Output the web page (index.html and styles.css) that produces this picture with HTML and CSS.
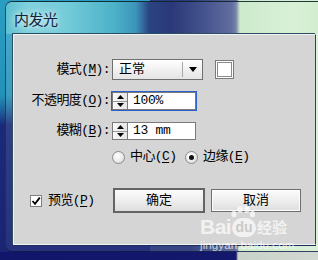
FILE: index.html
```html
<!DOCTYPE html>
<html lang="zh-CN">
<head>
<meta charset="utf-8">
<title>内发光</title>
<link rel="stylesheet" href="styles.css">
</head>
<body>
<div class="desktop">
  <div class="window">
    <div class="titlebar"><span class="title">内发光</span></div>
    <div class="client">
      <div class="row r1">
        <span class="label">模式(<u>M</u>):</span>
        <div class="select">
          <span class="sel-text">正常</span>
          <span class="sel-sep"></span>
          <svg class="sel-arrow" width="8" height="5" viewBox="0 0 8 5"><path d="M0 0H8L4 5Z" fill="#000"/></svg>
        </div>
        <div class="swatch"><div class="swatch-in"></div></div>
      </div>
      <div class="row r2">
        <span class="label">不透明度(<u>O</u>):</span>
        <div class="field focus">
          <div class="spin">
            <span class="spin-half"><svg width="7" height="4" viewBox="0 0 7 4"><path d="M3.5 0L7 4H0Z" fill="#000"/></svg></span>
            <span class="spin-half"><svg width="7" height="4" viewBox="0 0 7 4"><path d="M0 0H7L3.5 4Z" fill="#000"/></svg></span>
          </div>
          <div class="input">100%</div>
        </div>
      </div>
      <div class="row r3">
        <span class="label">模糊(<u>B</u>):</span>
        <div class="field">
          <div class="spin">
            <span class="spin-half"><svg width="7" height="4" viewBox="0 0 7 4"><path d="M3.5 0L7 4H0Z" fill="#000"/></svg></span>
            <span class="spin-half"><svg width="7" height="4" viewBox="0 0 7 4"><path d="M0 0H7L3.5 4Z" fill="#000"/></svg></span>
          </div>
          <div class="input">13 mm</div>
        </div>
      </div>
      <div class="row r4">
        <span class="label"></span>
        <span class="radio first"><span class="rb"></span>中心(<u>C</u>)</span>
        <span class="radio"><span class="rb on"></span>边缘(<u>E</u>)</span>
      </div>
      <div class="row r5">
        <div class="check-wrap">
          <span class="cb"><svg width="10" height="10" viewBox="0 0 10 10"><path d="M1.5 5L4 7.8L8.8 1.6" fill="none" stroke="#000" stroke-width="1.8"/></svg></span>
          <span>预览(<u>P</u>)</span>
        </div>
        <div class="btn default">确定</div>
        <div class="btn cancel">取消</div>
      </div>
    </div>
  </div>
  <div class="watermark">
    <svg class="paw" width="24" height="12" viewBox="0 0 24 12">
      <ellipse cx="3" cy="8" rx="2.6" ry="3.2" fill="#fff"/>
      <ellipse cx="9" cy="3.5" rx="2.8" ry="3.4" fill="#fff"/>
      <ellipse cx="16" cy="3.5" rx="2.8" ry="3.4" fill="#fff"/>
      <ellipse cx="21.5" cy="8" rx="2.6" ry="3.2" fill="#fff"/>
    </svg>
    <span class="wm-bai">Bai</span>
    <span class="wm-du">du</span>
    <span class="wm-jy">经验</span>
    <span class="wm-url">jingyan.baidu.com</span>
  </div>
</div>
</body>
</html>
```

FILE: styles.css
```css
html, body {
  margin: 0;
  padding: 0;
}

body {
  width: 318px;
  height: 260px;
  overflow: hidden;
  font-family: "Liberation Mono", "Noto Sans CJK SC", monospace;
  font-size: 13px;
  color: #000;
}

.desktop {
  position: relative;
  width: 318px;
  height: 260px;
  overflow: hidden;
  display: flex;
  flex-direction: column;
  background:
    linear-gradient(to right, #12166a 0, #14186c 236px, #c9d3c9 238px, #d2d8d2 100%) bottom / 100% 8px no-repeat,
    linear-gradient(to right, rgba(205,234,205,0) 236px, #cdeacd 239px, #d8f0d6 100%),
    linear-gradient(to bottom, #2a9ec2 0, #2392b8 95px, #1e5c98 112px, #1a2a78 125px, #1a2474 100%) left top / 150px 100% no-repeat,
    linear-gradient(to right, #2a3a7c 0, #2c3a7c 40px, #5a6898 86px) 150px 0 / 87px 100% no-repeat,
    #1a2474;
}

.window {
  box-sizing: border-box;
  width: 313px;
  height: 251px;
  margin: 1px 0 0 5px;
  padding: 0 2px 6px 7px;
  border-top: 1px solid rgba(16, 36, 44, 0.9);
  border-left: 1px solid rgba(20, 50, 70, 0.75);
  border-bottom: 1px solid rgba(10, 20, 60, 0.8);
  border-radius: 7px 0 0 7px;
  background: linear-gradient(to bottom, rgba(255,255,255,0.14), rgba(255,255,255,0.06));
  display: flex;
  flex-direction: column;
}

.titlebar {
  height: 32px;
  margin: 0 -2px 0 -7px;
  padding-left: 8px;
  display: flex;
  align-items: center;
  border-radius: 6px 0 0 0;
  background: linear-gradient(to right,
    #5fc0d0 0, #7fd1dd 22px, #74ccd9 60px, #4cb2c8 108px, #3c94ba 130px,
    #2b4482 143px, #2a3878 165px, #46558e 200px, #626ea0 226px, #7884a8 230px,
    #cdeacd 234px, #d8f1d6 290px, #d2edd0 100%);
}

.title {
  font-family: "Noto Sans CJK SC", sans-serif;
  font-size: 15px;
  line-height: 18px;
  color: #14243c;
  letter-spacing: -0.5px;
  text-shadow: 0 0 6px rgba(255,255,255,0.9), 0 0 10px rgba(255,255,255,0.7);
  margin-top: 1px;
}

.client {
  flex: 1;
  box-sizing: border-box;
  background: #d5d5d5;
  border: 1px solid #eef3f4;
  border-right-color: #3a423a;
  box-shadow: -1px -1px 0 #2c4c64, 0 1px 0 #1e2c5e;
  display: flex;
  flex-direction: column;
}

.row {
  display: flex;
  align-items: center;
}

.label {
  box-sizing: border-box;
  width: 97px;
  padding-right: 1px;
  text-align: right;
  white-space: nowrap;
  line-height: 16px;
  letter-spacing: -0.6px;
}

u {
  text-underline-offset: 2px;
}

.r1 { margin-top: 24px; height: 21px; }
.r2 { margin-top: 11px; height: 20px; }
.r3 { margin-top: 10px; height: 20px; }
.r4 { margin-top: 8px; height: 16px; }
.r5 { margin-top: 23px; height: 25px; }

/* select */
.select {
  box-sizing: border-box;
  width: 91px;
  height: 21px;
  margin-left: 1px;
  border: 1px solid #6f6f6f;
  background: linear-gradient(to bottom, #ffffff, #f1f1f1 50%, #e4e4e4);
  display: flex;
  align-items: center;
}

.sel-text {
  flex: 1;
  padding-left: 6px;
  line-height: 16px;
}

.sel-sep {
  width: 1px;
  height: 15px;
  background: #a8a8a8;
  margin-right: 6px;
}

.sel-arrow {
  margin-right: 5px;
}

.swatch {
  box-sizing: border-box;
  width: 19px;
  height: 19px;
  margin-left: 12px;
  border: 1px solid #7a7a7a;
  padding: 1px;
  background: #fff;
}

.swatch-in {
  box-sizing: border-box;
  width: 100%;
  height: 100%;
  border: 1px solid #8a8a8a;
  background: #fff;
}

/* spin fields */
.field {
  box-sizing: border-box;
  width: 86px;
  height: 20px;
  border: 1px solid transparent;
  display: flex;
}

.field.focus {
  border-color: #2b5fcc;
}

.spin {
  box-sizing: border-box;
  width: 16px;
  border: 1px solid #7a7a7a;
  background: linear-gradient(to right, #f8f8f8, #e6e6e6);
  display: flex;
  flex-direction: column;
}

.spin-half {
  flex: 1;
  display: flex;
  align-items: center;
  justify-content: center;
}

.spin-half + .spin-half {
  border-top: 1px solid #9a9a9a;
}

.input {
  flex: 1;
  box-sizing: border-box;
  border: 1px solid #7a7a7a;
  border-left: none;
  background: #fff;
  padding-left: 5px;
  display: flex;
  align-items: center;
  line-height: 16px;
  letter-spacing: -0.3px;
}

/* radios */
.radio {
  display: flex;
  align-items: center;
  line-height: 16px;
  white-space: nowrap;
  letter-spacing: -0.6px;
}

.radio.first {
  width: 73px;
  margin-left: 1px;
}

.rb {
  box-sizing: border-box;
  width: 13px;
  height: 13px;
  border-radius: 50%;
  border: 1px solid #8c8c8c;
  background: radial-gradient(circle at 40% 35%, #ffffff, #e8e8e8 60%, #cfcfcf);
  margin-right: 5px;
  display: flex;
  align-items: center;
  justify-content: center;
}

.rb.on::after {
  content: "";
  width: 5px;
  height: 5px;
  border-radius: 50%;
  background: #111;
}

/* checkbox */
.check-wrap {
  box-sizing: border-box;
  width: 99px;
  padding-left: 16px;
  display: flex;
  align-items: center;
  line-height: 16px;
  white-space: nowrap;
  letter-spacing: -0.6px;
}

.cb {
  box-sizing: border-box;
  width: 12px;
  height: 12px;
  border: 1px solid #7f7f7f;
  background: #fff;
  margin-right: 6px;
  display: flex;
  align-items: center;
  justify-content: center;
}

/* buttons */
.btn {
  box-sizing: border-box;
  display: flex;
  align-items: center;
  justify-content: center;
  line-height: 16px;
  background: linear-gradient(to bottom, #fbfbfb, #eeeeee 50%, #dedede);
}

.btn.default {
  width: 92px;
  height: 25px;
  border: 2px solid #646464;
}

.btn.cancel {
  width: 90px;
  height: 23px;
  margin-left: 6px;
  border: 1px solid #6e6e6e;
  box-shadow: inset 0 0 0 1px #fdfdfd;
}

/* watermark */
.watermark {
  position: absolute;
  left: 199px;
  top: 206px;
  width: 92px;
  height: 50px;
  opacity: 0.7;
  color: #fff;
  font-family: "Liberation Sans", "Noto Sans CJK SC", sans-serif;
}

.paw {
  position: absolute;
  left: 32px;
  top: 0;
}

.wm-bai {
  position: absolute;
  left: 1px;
  top: 9px;
  font-size: 21px;
  font-weight: bold;
  line-height: 24px;
  letter-spacing: -0.5px;
}

.wm-du {
  position: absolute;
  left: 33px;
  top: 12px;
  width: 24px;
  height: 19px;
  border-radius: 10px 10px 9px 9px;
  background: #fff;
  color: #c4c4c4;
  font-size: 14px;
  font-weight: bold;
  line-height: 18px;
  text-align: center;
}

.wm-jy {
  position: absolute;
  left: 58px;
  top: 11px;
  font-family: "Noto Sans CJK SC", sans-serif;
  font-size: 15px;
  font-weight: bold;
  line-height: 20px;
}

.wm-url {
  position: absolute;
  left: 1px;
  top: 32px;
  font-size: 11.5px;
  line-height: 14px;
  letter-spacing: 0.1px;
}
```
